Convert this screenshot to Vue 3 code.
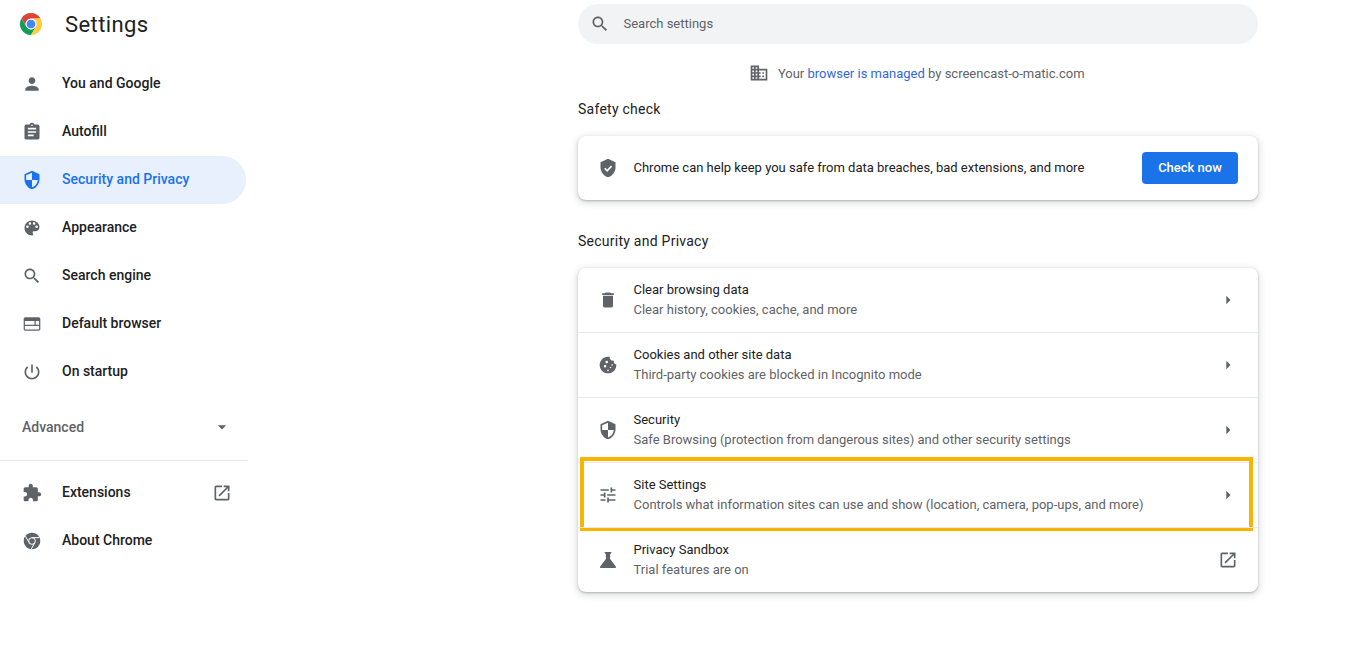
<script setup>
const icons = {
  person: 'M12 12c2.21 0 4-1.79 4-4s-1.79-4-4-4-4 1.79-4 4 1.79 4 4 4zm0 2c-2.67 0-8 1.34-8 4v2h16v-2c0-2.66-5.33-4-8-4z',
  assignment: 'M19 3h-4.18C14.4 1.84 13.3 1 12 1c-1.3 0-2.4.84-2.82 2H5c-1.1 0-2 .9-2 2v14c0 1.1.9 2 2 2h14c1.1 0 2-.9 2-2V5c0-1.1-.9-2-2-2zm-7 0c.55 0 1 .45 1 1s-.45 1-1 1-1-.45-1-1 .45-1 1-1zm2 14H7v-2h7v2zm3-4H7v-2h10v2zm0-4H7V7h10v2z',
  security: 'M12 1L3 5v6c0 5.55 3.84 10.74 9 12 5.16-1.26 9-6.45 9-12V5l-9-4zm0 10.99h7c-.53 4.12-3.28 7.79-7 8.94V12H5V6.3l7-3.11v8.8z',
  palette: 'M12 3c-4.97 0-9 4.03-9 9s4.03 9 9 9c.83 0 1.5-.67 1.5-1.5 0-.39-.15-.74-.39-1.01-.23-.26-.38-.61-.38-.99 0-.83.67-1.5 1.5-1.5H16c2.76 0 5-2.24 5-5 0-4.42-4.03-8-9-8zm-5.5 9c-.83 0-1.5-.67-1.5-1.5S5.67 9 6.5 9 8 9.67 8 10.5 7.33 12 6.5 12zm3-4C8.67 8 8 7.33 8 6.5S8.67 5 9.5 5s1.5.67 1.5 1.5S10.33 8 9.5 8zm5 0c-.83 0-1.5-.67-1.5-1.5S13.67 5 14.5 5s1.5.67 1.5 1.5S15.33 8 14.5 8zm3 4c-.83 0-1.5-.67-1.5-1.5S16.67 9 17.5 9s1.5.67 1.5 1.5-.67 1.5-1.5 1.5z',
  search: 'M15.5 14h-.79l-.28-.27C15.41 12.59 16 11.11 16 9.5 16 5.91 13.09 3 9.5 3S3 5.91 3 9.5 5.91 16 9.5 16c1.61 0 3.09-.59 4.23-1.57l.27.28v.79l5 4.99L20.49 19l-4.99-5zm-6 0C7.01 14 5 11.99 5 9.5S7.01 5 9.5 5 14 7.01 14 9.5 11.99 14 9.5 14z',
  web: 'M20 4H4c-1.1 0-2 .9-2 2v12c0 1.1.9 2 2 2h16c1.1 0 2-.9 2-2V6c0-1.1-.9-2-2-2zM3.5 8.5H15V13H3.5zm0 6h17V18.5h-17zM16.5 8.5h4V13h-4z',
  power: 'M13 3h-2v10h2V3zm4.83 2.17l-1.42 1.42C17.99 7.86 19 9.81 19 12c0 3.87-3.13 7-7 7s-7-3.13-7-7c0-2.19 1.01-4.14 2.58-5.42L6.17 5.17C4.23 6.82 3 9.26 3 12c0 4.97 4.03 9 9 9s9-4.03 9-9c0-2.74-1.23-5.18-3.17-6.83z',
  extension: 'M20.5 11H19V7c0-1.1-.9-2-2-2h-4V3.5C13 2.12 11.88 1 10.5 1S8 2.12 8 3.5V5H4c-1.1 0-1.99.9-1.99 2v3.8H3.5c1.49 0 2.7 1.21 2.7 2.7s-1.21 2.7-2.7 2.7H2V20c0 1.1.9 2 2 2h3.8v-1.5c0-1.49 1.21-2.7 2.7-2.7 1.49 0 2.7 1.21 2.7 2.7V22H17c1.1 0 2-.9 2-2v-4h1.5c1.38 0 2.5-1.12 2.5-2.5S21.88 11 20.5 11z',
  open: 'M19 19H5V5h7V3H5c-1.11 0-2 .9-2 2v14c0 1.1.89 2 2 2h14c1.1 0 2-.9 2-2v-7h-2v7zM14 3v2h3.59l-9.83 9.83 1.41 1.41L19 6.41V10h2V3h-7z',
  trash: 'M6 19c0 1.1.9 2 2 2h8c1.1 0 2-.9 2-2V7H6v12zM19 4h-3.5l-1-1h-5l-1 1H5v2h14V4z',
  cookie: 'M21.95 10.99c-1.79-.03-3.7-1.95-2.68-4.22-2.98 1-5.77-1.59-5.19-4.56C6.95.71 2 6.58 2 12c0 5.52 4.48 10 10 10 5.89 0 10.54-5.08 9.95-11.01zM8.5 15c-.83 0-1.5-.67-1.5-1.5S7.67 12 8.5 12s1.5.67 1.5 1.5S9.33 15 8.5 15zm2-5C9.67 10 9 9.33 9 8.5S9.67 7 10.5 7s1.5.67 1.5 1.5-.67 1.5-1.5 1.5zm4.5 6c-.55 0-1-.45-1-1s.45-1 1-1 1 .45 1 1-.45 1-1 1zM17 13c-.55 0-1-.45-1-1s.45-1 1-1 1 .45 1 1-.45 1-1 1zM12 19.5c-.55 0-1-.45-1-1s.45-1 1-1 1 .45 1 1-.45 1-1 1z',
  tune: 'M3 17v2h6v-2H3zM3 5v2h10V5H3zm10 16v-2h8v-2h-8v-2h-2v6h2zM7 9v2H3v2h4v2h2V9H7zm14 4v-2H11v2h10zm-6-4h2V7h4V5h-4V3h-2v6z',
  flask: 'M19.8 18.4L14 10.67V6.5l1.35-1.69c.26-.33.03-.81-.39-.81H9.04c-.42 0-.65.48-.39.81L10 6.5v4.17L4.2 18.4c-.49.66-.02 1.6.8 1.6h14c.82 0 1.29-.94.8-1.6z',
  domain: 'M12 7V3H2v18h20V7H12zM6 19H4v-2h2v2zm0-4H4v-2h2v2zm0-4H4V9h2v2zm0-4H4V5h2v2zm4 12H8v-2h2v2zm0-4H8v-2h2v2zm0-4H8V9h2v2zm0-4H8V5h2v2zm10 12h-8v-2h2v-2h-2v-2h2v-2h-2V9h8v10zm-2-8h-2v2h2v-2zm0 4h-2v2h2v-2z',
  shield: 'M12 1L3 5v6c0 5.55 3.84 10.74 9 12 5.16-1.26 9-6.45 9-12V5l-9-4z',
  arrow: 'M10 17l5-5-5-5v10z',
  down: 'M7 10l5 5 5-5z'
}
const nav = [
  { label: 'You and Google', icon: 'person' },
  { label: 'Autofill', icon: 'assignment' },
  { label: 'Security and Privacy', icon: 'security', active: true },
  { label: 'Appearance', icon: 'palette' },
  { label: 'Search engine', icon: 'search' },
  { label: 'Default browser', icon: 'web' },
  { label: 'On startup', icon: 'power' }
]
const rows = [
  { title: 'Clear browsing data', sub: 'Clear history, cookies, cache, and more', icon: 'trash', end: 'arrow' },
  { title: 'Cookies and other site data', sub: 'Third-party cookies are blocked in Incognito mode', icon: 'cookie', end: 'arrow' },
  { title: 'Security', sub: 'Safe Browsing (protection from dangerous sites) and other security settings', icon: 'security', end: 'arrow' },
  { title: 'Site Settings', sub: 'Controls what information sites can use and show (location, camera, pop-ups, and more)', icon: 'tune', end: 'arrow', marked: true },
  { title: 'Privacy Sandbox', sub: 'Trial features are on', icon: 'flask', end: 'open' }
]
</script>

<template>
  <div class="page">
    <aside class="sidebar">
      <header class="brand">
        <svg class="logo" viewBox="0 0 48 48" width="22" height="22">
          <path fill="#db4437" d="M24 0A24 24 0 0 1 44.8 12H24A12 12 0 0 0 13.6 30L3.2 12A24 24 0 0 1 24 0z" />
          <path fill="#0f9d58" d="M3.2 12L13.6 30A12 12 0 0 0 34.4 30L24 48A24 24 0 0 1 3.2 12z" />
          <path fill="#ffcd40" d="M44.8 12H24A12 12 0 0 1 34.4 30L24 48A24 24 0 0 0 44.8 12z" />
          <circle cx="24" cy="24" r="11.5" fill="#fff" />
          <circle cx="24" cy="24" r="9.5" fill="#4285f4" />
        </svg>
        <h1>Settings</h1>
      </header>
      <nav class="nav">
        <a v-for="item in nav" :key="item.label" class="nav-item" :class="{ active: item.active }">
          <svg class="ico" viewBox="0 0 24 24"><path :d="icons[item.icon]" /></svg>
          <span>{{ item.label }}</span>
        </a>
      </nav>
      <div class="advanced">
        <span>Advanced</span>
        <svg class="ico" viewBox="0 0 24 24"><path :d="icons.down" /></svg>
      </div>
      <div class="divider"></div>
      <a class="nav-item">
        <svg class="ico" viewBox="0 0 24 24"><path :d="icons.extension" /></svg>
        <span class="grow">Extensions</span>
        <svg class="ico ext" viewBox="0 0 24 24"><path :d="icons.open" /></svg>
      </a>
      <a class="nav-item">
        <svg class="ico" viewBox="0 0 24 24">
          <circle cx="12" cy="12" r="10" fill="#5f6368" />
          <circle cx="12" cy="12" r="4" fill="none" stroke="#fff" stroke-width="1.2" />
          <path fill="none" stroke="#fff" stroke-width="1.2" d="M12 8h9M8.6 14l-4.5-7.8M15.4 14L11 21.8" />
        </svg>
        <span>About Chrome</span>
      </a>
    </aside>

    <main class="main">
      <div class="search">
        <svg class="ico" viewBox="0 0 24 24"><path :d="icons.search" /></svg>
        <span>Search settings</span>
      </div>
      <div class="managed">
        <svg class="ico" viewBox="0 0 24 24"><path :d="icons.domain" /></svg>
        <span>Your <a class="link">browser is managed</a> by screencast-o-matic.com</span>
      </div>
      <h2 class="heading first">Safety check</h2>
      <section class="card safety">
        <svg class="ico" viewBox="0 0 24 24">
          <path :d="icons.shield" />
          <path d="M8 12.3l3 3 5.2-5.6" fill="none" stroke="#fff" stroke-width="2" />
        </svg>
        <span class="grow">Chrome can help keep you safe from data breaches, bad extensions, and more</span>
        <button class="btn">Check now</button>
      </section>
      <h2 class="heading second">Security and Privacy</h2>
      <section class="card">
        <div v-for="row in rows" :key="row.title" class="row">
          <svg class="ico" :class="row.icon" viewBox="0 0 24 24"><path :d="icons[row.icon]" /></svg>
          <div class="grow">
            <div class="title">{{ row.title }}</div>
            <div class="sub">{{ row.sub }}</div>
          </div>
          <svg class="ico end" viewBox="0 0 24 24"><path :d="icons[row.end]" /></svg>
          <div v-if="row.marked" class="mark"></div>
        </div>
      </section>
    </main>
  </div>
</template>

<style scoped>
.page {
  display: flex;
  align-items: flex-start;
  width: 1348px;
  height: 663px;
  overflow: hidden;
  background: #fff;
  color: #202124;
  font-family: Roboto, "Liberation Sans", sans-serif;
  font-size: 13px;
}
.sidebar {
  width: 248px;
  flex: none;
}
.brand {
  display: flex;
  align-items: center;
  height: 48px;
  padding-left: 20px;
}
.logo {
  flex: none;
}
.brand h1 {
  margin: 0 0 0 23px;
  font-size: 22px;
  font-weight: 400;
  letter-spacing: 0.4px;
}
.nav {
  margin-top: 12px;
}
.nav-item {
  display: flex;
  align-items: center;
  width: 246px;
  height: 48px;
  box-sizing: border-box;
  padding-left: 22px;
  font-size: 14px;
  font-weight: 500;
  border-radius: 0 24px 24px 0;
}
.nav-item > span {
  margin-left: 20px;
  margin-bottom: 2px;
}
.ico {
  width: 20px;
  height: 20px;
  flex: none;
  fill: #5f6368;
}
.ico.flask {
  width: 24px;
  height: 24px;
  margin: 0 -2px;
}
.nav-item.active {
  background: #e8f0fe;
  color: #1a73e8;
}
.nav-item.active .ico {
  fill: #1a73e8;
}
.grow {
  flex: 1;
  min-width: 0;
}
.ext {
  margin-right: 14px;
}
.advanced {
  display: flex;
  align-items: center;
  justify-content: space-between;
  height: 48px;
  margin-top: 7px;
  padding: 0 16px 0 22px;
  font-size: 14px;
  font-weight: 500;
  color: #5f6368;
}
.divider {
  height: 1px;
  margin-top: 9px;
  margin-bottom: 8px;
  background: #e5e7ea;
}
.main {
  width: 680px;
  margin-left: 330px;
  flex: none;
}
.search {
  display: flex;
  align-items: center;
  height: 40px;
  margin-top: 4px;
  padding-left: 12px;
  background: #f1f3f4;
  border-radius: 20px;
  color: #5f6368;
}
.search span {
  margin-left: 13.5px;
  margin-bottom: 2px;
}
.managed {
  display: flex;
  align-items: center;
  justify-content: center;
  height: 20px;
  margin-top: 19px;
  padding-right: 2px;
  color: #5f6368;
}
.managed .ico {
  margin-right: 8.5px;
}
.link {
  color: #3367d6;
}
.heading {
  margin: 0;
  font-size: 14px;
  font-weight: 400;
  line-height: 20px;
  letter-spacing: 0.25px;
}
.heading.first {
  margin-top: 16px;
}
.heading.second {
  margin-top: 31px;
}
.card {
  margin-top: 17px;
  background: #fff;
  border-radius: 8px;
  box-shadow: 0 1px 2px rgba(60, 64, 67, 0.3), 0 2px 6px 2px rgba(60, 64, 67, 0.15);
}
.safety {
  display: flex;
  align-items: center;
  height: 64px;
  padding: 0 20px;
}
.safety .grow {
  margin-left: 15.5px;
  margin-bottom: 2px;
}
.btn {
  width: 96px;
  height: 32px;
  border: 0;
  border-radius: 4px;
  background: #1a73e8;
  color: #fff;
  font: 500 13px Roboto, sans-serif;
  padding: 0 0 2px;
}
.row {
  position: relative;
  display: flex;
  align-items: center;
  height: 65px;
  box-sizing: border-box;
  padding: 0 20px;
  border-top: 1px solid #e8eaed;
}
.row:first-child {
  height: 64px;
  border-top: 0;
}
.row > .grow {
  margin-left: 15.5px;
}
.title {
  line-height: 20px;
  color: #202124;
}
.sub {
  line-height: 20px;
  color: #5f6368;
}
.mark {
  position: absolute;
  left: 2px;
  right: 5px;
  top: -6px;
  height: 74px;
  box-sizing: border-box;
  border: 4px solid #f9b400;
  pointer-events: none;
}
</style>
